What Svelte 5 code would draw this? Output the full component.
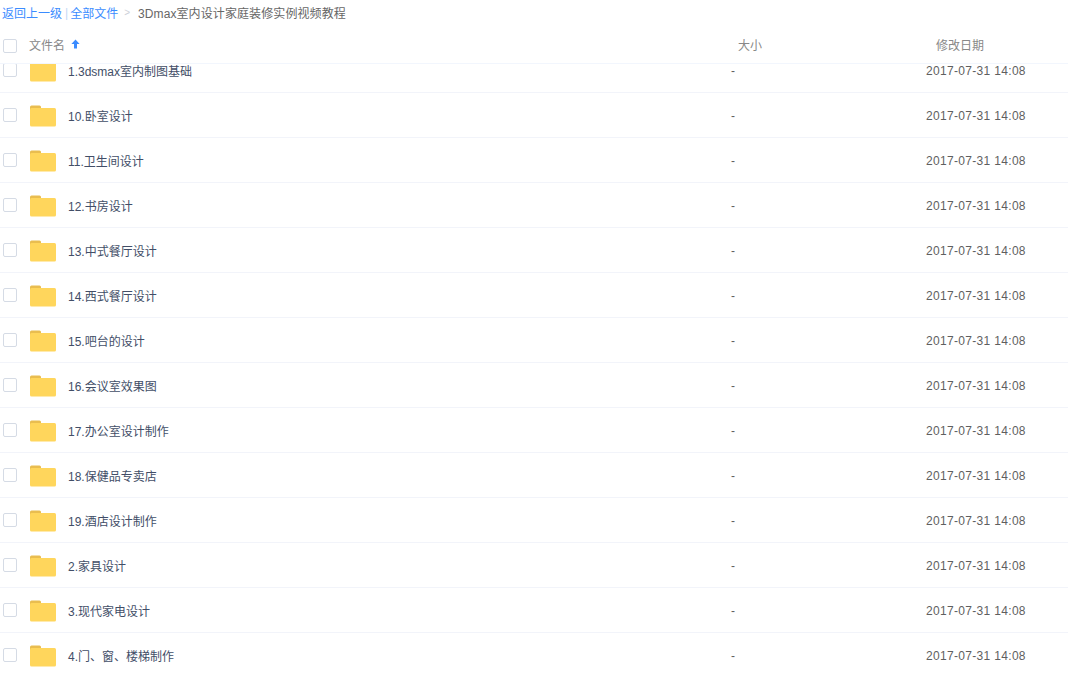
<script>
  const files = [
    '1.3dsmax室内制图基础',
    '10.卧室设计',
    '11.卫生间设计',
    '12.书房设计',
    '13.中式餐厅设计',
    '14.西式餐厅设计',
    '15.吧台的设计',
    '16.会议室效果图',
    '17.办公室设计制作',
    '18.保健品专卖店',
    '19.酒店设计制作',
    '2.家具设计',
    '3.现代家电设计',
    '4.门、窗、楼梯制作'
  ];
</script>

<div class="page">
  <div class="crumbs">
    <a href="#back">返回上一级</a>
    <span class="sep">|</span>
    <a href="#all">全部文件</a>
    <span class="gt">&gt;</span>
    <span class="current">3Dmax室内设计家庭装修实例视频教程</span>
  </div>

  <div class="head">
    <div class="col-name">
      <span class="check"></span>
      <span class="head-label name-label">文件名</span>
      <svg class="arrow" width="9" height="10" viewBox="0 0 9 10">
        <path d="M4.5 0.5 L8.6 5 H6 V9.5 H3 V5 H0.4 Z" fill="#3b8cff" />
      </svg>
    </div>
    <div class="col-size"><span class="head-label">大小</span></div>
    <div class="col-date"><span class="head-label">修改日期</span></div>
  </div>

  <div class="list">
    <div class="rows">
      {#each files as name}
        <div class="row">
          <div class="col-name">
            <span class="check"></span>
            <svg class="folder" width="26" height="22" viewBox="0 0 26 22">
              <path d="M0 2 a1.5 1.5 0 0 1 1.5 -1.5 h8 a1.5 1.5 0 0 1 1.5 1.5 v3 h-11 z" fill="#e9bd50" />
              <rect x="0" y="3" width="26" height="18.5" rx="1.5" fill="#ffd65c" />
            </svg>
            <span class="file-name">{name}</span>
          </div>
          <div class="col-size"><span class="dash">-</span></div>
          <div class="col-date"><span class="date">2017-07-31 14:08</span></div>
        </div>
      {/each}
    </div>
  </div>
</div>

<style>
  :global(body) {
    background: #fff;
    overflow: hidden;
  }

  .page {
    height: 673px;
    display: flex;
    flex-direction: column;
    overflow: hidden;
    font-family: "Liberation Sans", "Noto Sans CJK SC", sans-serif;
    font-size: 12px;
  }

  .crumbs {
    height: 25px;
    display: flex;
    align-items: center;
    padding-left: 2px;
    color: #666;
  }

  .crumbs a {
    color: #3b8cff;
    text-decoration: none;
  }

  .sep {
    color: #c5d8f5;
    margin: 0 2px 0 3px;
  }

  .gt {
    color: #ccd0d8;
    margin: 0 8px 0 6px;
    font-size: 10px;
  }

  .current {
    color: #666;
    letter-spacing: 0.1px;
  }

  .head {
    height: 38px;
    display: flex;
    align-items: center;
    border-bottom: 1px solid #f2f6fd;
  }

  .head .check {
    margin-top: 4px;
  }

  .head-label {
    color: #888;
  }

  .name-label {
    margin-left: 12px;
  }

  .arrow {
    margin-left: 6px;
  }

  .col-name {
    width: 731px;
    flex-shrink: 0;
    display: flex;
    align-items: center;
    padding-left: 3px;
    box-sizing: border-box;
  }

  .col-size {
    width: 195px;
    flex-shrink: 0;
  }

  .head .col-size {
    padding-left: 7px;
    box-sizing: border-box;
  }

  .head .col-date {
    padding-left: 10px;
  }

  .check {
    width: 12px;
    height: 12px;
    border: 1px solid #d5dbe5;
    border-radius: 2px;
    flex-shrink: 0;
  }

  .list {
    flex: 1;
    overflow: hidden;
  }

  .rows {
    margin-top: -16px;
  }

  .row {
    height: 44px;
    display: flex;
    align-items: center;
    border-bottom: 1px solid #f2f4fa;
  }

  .row .col-size,
  .row .col-date {
    padding-top: 2px;
    box-sizing: border-box;
  }

  .folder {
    margin: 2px 0 0 13px;
    flex-shrink: 0;
  }

  .file-name {
    margin-left: 12px;
    color: #424e67;
  }

  .dash,
  .date {
    color: #5f5f5f;
  }

  .date {
    letter-spacing: 0.32px;
  }
</style>
